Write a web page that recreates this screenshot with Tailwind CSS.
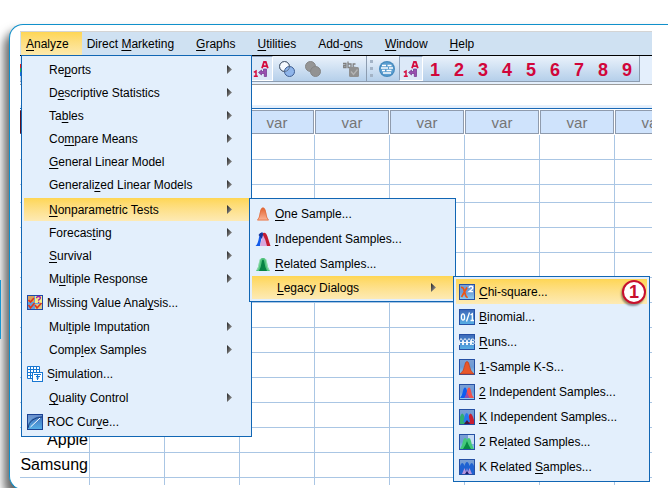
<!DOCTYPE html>
<html lang="en">
<head>
<meta charset="utf-8">
<title>Data Editor</title>
<script src="https://cdn.jsdelivr.net/npm/@tailwindcss/browser@4"></script>
</head>
<body class="relative h-screen overflow-hidden bg-white pt-6 pl-[9px] font-['Liberation_Sans',Arial,sans-serif] text-xs text-black [text-decoration-skip-ink:none]">

<svg class="absolute size-0" aria-hidden="true">
  <defs>
    <linearGradient id="blue" x1="0" y1="0" x2="0" y2="1"><stop offset="0" stop-color="#7c9fd4"/><stop offset=".5" stop-color="#6b9bd6"/><stop offset="1" stop-color="#8fd0f2"/></linearGradient>
    <linearGradient id="deep" x1="0" y1="0" x2="0" y2="1"><stop offset="0" stop-color="#3d68b8"/><stop offset="1" stop-color="#57b0e6"/></linearGradient>
    <linearGradient id="orange" x1="0" y1="0" x2="0" y2="1"><stop offset="0" stop-color="#e2622c"/><stop offset="1" stop-color="#fbb79a"/></linearGradient>
    <linearGradient id="arrowg" x1="0" y1="0" x2="1" y2="1"><stop offset="0" stop-color="#222"/><stop offset="1" stop-color="#aaa"/></linearGradient>
  </defs>
  <symbol id="i-missing" viewBox="0 0 16 16"><rect width="16" height="15" fill="#1f4aa8"/><rect x="1" y="1" width="14" height="13" fill="#5fa3dd"/><rect x="8" y="1" width="7" height="7" fill="#f3f08a"/><rect x="1" y="1" width="6" height="6" fill="#d8a05c"/><rect x="8" y="9" width="7" height="5" fill="#d9c88a"/><path d="M1.500 5l2 2 3.500-4M1.500 10l2 3 4-5M8 10l2 3 4.500-5" fill="none" stroke="#e33418" stroke-width="1.600"/><path d="M9.500 3.200q0-1.700 1.900-1.700 2 0 2 1.500 0 1-1.800 2v.8M11.600 6.800v1.200" fill="none" stroke="#a01ca8" stroke-width="1.400"/></symbol>
  <symbol id="i-simulation" viewBox="0 0 16 16"><path d="M.5.500h12v12H.5zM.5 3.500h12M.5 6.500h12M.5 9.500h12M3.500.500v12M6.500.500v12M9.500.500v12" fill="#fff" stroke="#1877d2"/><rect x="5.500" y="6.500" width="10" height="9" fill="#fff" stroke="#1877d2"/><path d="M7 8.500h7M9 10.500h4M9.500 12h2.500M10.500 8v6" stroke="#1877d2"/></symbol>
  <symbol id="i-roc" viewBox="0 0 16 16"><rect x=".5" y=".5" width="15" height="15" fill="url(#deep)" stroke="#1b4395"/><path d="M1 15V12Q2 3 15 2V1H1z" fill="#b9d5ee" opacity=".35"/><path d="M1 14Q2 4 15 3" fill="none" stroke="#1b3f7e"/><path d="M3.500 13L13 4" stroke="#fff"/></symbol>
  <symbol id="i-one" viewBox="0 0 16 16"><path d="M2 14.500Q4 12.500 5 6 5.800 1.500 8 1.500T11 6q1 6.500 3 8.500z" fill="url(#orange)"/><path d="M2.500 14Q4.500 12.500 5.300 6.500 6 2 8 2t2.700 4.500q.8 6 2.800 7.500z" fill="none" stroke="#dd6a3d" stroke-width=".7"/></symbol>
  <symbol id="i-indep" viewBox="0 0 16 16"><path d="M.5 15Q3 13 4 6.500 5 1.500 7.500 1.500 5.800 10 5 15z" fill="#125bea"/><path d="M3.500 4Q5 1 7.500 1.500L9 5 7 8z" fill="#16359a"/><path d="M5 15Q6.500 8 8 4l3 2 1.500 9z" fill="#d9a8dd"/><path d="M8 2q3-1.500 4.500 3.500l3 9.500H12Q11 9 8 4z" fill="#c51d32"/></symbol>
  <symbol id="i-related" viewBox="0 0 16 16"><path d="M1 15Q3.500 12 4 6.500 5 1.500 8 2q3-.5 4 4.500.5 5.500 3 8.500z" fill="#53c47e"/><path d="M4 15Q6 11 6.500 7 7 3.500 8 3.500T9.500 7q.5 4 2.500 8z" fill="#078243"/><path d="M5 3Q3.800 11 2.500 14M11 3q1 8 2.500 11" fill="none" stroke="#a6e4bd" stroke-width=".7"/></symbol>
  <symbol id="i-chi" viewBox="0 0 16 16"><rect x=".5" y=".5" width="15" height="15" fill="url(#blue)" stroke="#2550a5"/><path d="M2 3.500q2-.5 2.700 1.800l2 6.200q.6 2 2 1.500M8 3.500L2.500 13" fill="none" stroke="#ed5415" stroke-width="1.700"/><path d="M10 3.800q.3-1.500 2-1.500 1.800 0 1.800 1.500 0 1-3.600 3.800H14" fill="none" stroke="#fff" stroke-width="1.400"/></symbol>
  <symbol id="i-binomial" viewBox="0 0 16 16"><rect x=".5" y=".5" width="15" height="15" fill="url(#deep)" stroke="#2550a5"/><ellipse cx="4" cy="8" rx="1.600" ry="3.200" fill="none" stroke="#fff" stroke-width="1.300"/><path d="M7.500 12.500l3-9M11.500 6l1.800-1.300V11.500M11.500 11.500H15" fill="none" stroke="#fff" stroke-width="1.300"/></symbol>
  <symbol id="i-runs" viewBox="0 0 16 16"><rect x=".5" y=".5" width="15" height="15" fill="url(#deep)" stroke="#2550a5"/><path d="M.5 11V6.500L2 4.500 3.500 6.500V11M.5 8.500h3M4.500 11V6.500L6 4.500 7.500 6.500V11M4.500 8.500h3M8.500 11V6.500L10 4.500 11.500 6.500V11M8.500 8.500h3M12.500 5v5.500h2l.8-1-.8-1.700h-2 2l.8-1.300-.8-1.500z" fill="none" stroke="#fff" stroke-width=".9"/></symbol>
  <symbol id="i-ks" viewBox="0 0 16 16"><rect x=".5" y=".5" width="15" height="15" fill="url(#blue)" stroke="#2550a5"/><path d="M1 15Q5 12 5.700 6.500 6.300 2.500 8 2.500t2.300 4Q11 12 15 15z" fill="#e8562a" stroke="#c33a14" stroke-width=".7"/></symbol>
  <symbol id="i-2ind" viewBox="0 0 16 16"><rect x=".5" y=".5" width="15" height="15" fill="url(#blue)" stroke="#2550a5"/><path d="M1 14Q3.500 11 4 7q.7-3.500 2-3.500T8 7q.5 4 2.500 7z" fill="#0d5cf0"/><path d="M5.500 14Q7.500 11 8 7q.5-3.500 2-3.500T12 7q.5 4 3 7z" fill="#f0524e"/><path d="M5.500 14Q7 11 8 8q1 3 2.500 6z" fill="#8d4fb4"/></symbol>
  <symbol id="i-kind" viewBox="0 0 16 16"><rect x=".5" y=".5" width="15" height="15" fill="url(#blue)" stroke="#2550a5"/><path d="M1 15V8q1-3.500 2.300-3.500T5.500 8L8 15z" fill="#2fae72"/><path d="M8 15l1.500-7q.8-3.500 2-3.500T14 8l1 3v4z" fill="#c81d31"/><path d="M4.500 13l1.200-6q.8-3 2-3t2 3l1.300 6-3.300 1z" fill="#2777ee"/><path d="M5 15l3-4 3 4z" fill="#421442"/></symbol>
  <symbol id="i-2rel" viewBox="0 0 16 16"><rect x=".5" y=".5" width="15" height="15" fill="url(#blue)" stroke="#2550a5"/><rect x="9" y="1" width="6" height="9" fill="#c8dbf4"/><path d="M1 15Q3.500 11 4 7q.7-3 2-3t2 2q.7-2 2-2t2 3q.5 4 3 8z" fill="#43c979"/><path d="M4 15q2.500-3.500 4-8 1.500 4.500 4 8z" fill="#078a43"/></symbol>
  <symbol id="i-krel" viewBox="0 0 16 16"><rect x=".5" y=".5" width="15" height="15" fill="url(#blue)" stroke="#2550a5"/><path d="M1 15V7q1-3 2.300-3T5.500 7Q6.500 3 8 3t2.500 4q1-3 2.200-3T15 7v8z" fill="#1f62d2"/><path d="M3 15l2.500-6L7 13l1-4 1 4 1.500-4L13 15z" fill="#b795dc"/><path d="M6 15l2-3 2 3z" fill="#161b6c"/></symbol>
  <symbol id="i-labels" viewBox="0 0 16 16"><path d="M9 7.200L11 1h1.800l2 6.200M10 5.200h4" fill="none" stroke="#d40d3f" stroke-width="1.800"/><path d="M.8 11.300L3 10v5.500M.8 15.300h4" fill="none" stroke="#d40d3f" stroke-width="1.500"/><path d="M5.500 11.500L8.500 9v1.500h2V8h3v7.500h-2.200v-3H8.500V14z" fill="#9a4fb0" stroke="#71308c" stroke-width=".7"/></symbol>
  <symbol id="i-sets" viewBox="0 0 16 16"><circle cx="5.500" cy="5.500" r="5" fill="#f5f9fe" stroke="#56657a"/><circle cx="10.500" cy="10.500" r="5" fill="#8fb5ea" stroke="#3f5e92"/><circle cx="5.500" cy="5.500" r="5" fill="none" stroke="#56657a" stroke-width=".8"/></symbol>
  <symbol id="i-sets-off" viewBox="0 0 16 16"><circle cx="5.500" cy="5.500" r="5" fill="#959595" stroke="#858585"/><circle cx="10.500" cy="10.500" r="5" fill="#929292" stroke="#858585"/></symbol>
  <symbol id="i-spell" viewBox="0 0 16 16"><path d="M0 2.500h3v4H.7v-2H3M5 .5v6h3V3H5M12.500 3h-2.300v3.500h2.300" fill="none" stroke="#808080" stroke-width="1.300"/><rect x="6" y="6" width="10" height="10" rx="1.500" fill="#909090"/><path d="M8 10.500L10.500 13.500 14.500 8.500" fill="none" stroke="#b4b4b4" stroke-width="1.300"/></symbol>
  <symbol id="i-globe" viewBox="0 0 16 16"><circle cx="8" cy="8" r="8" fill="#4589bd"/><circle cx="8" cy="8" r="6.800" fill="#5c9ed0"/><path d="M3 4.500h4M8.500 4.500h4M2 7h7M10 7h4M3 9.500h3M7.500 9.500h5M4 12h8" stroke="#fff" stroke-width="1.300"/></symbol>
</svg>

<div class="absolute top-[280px] left-0 h-[59px] w-px bg-[#1496d2]"></div>

<div class="rounded-l-[14px] border border-r-0 border-[#1090cb] bg-white pt-1.5 pr-4 pb-1 pl-2.5 shadow-[-4px_8px_10px_1px_rgba(0,0,0,0.6)]">
  <div class="relative">
    <nav id="menubar" aria-label="Main menu" class="flex h-[25px] border-t border-b border-t-[#d4d4d4] border-b-black bg-[#cfe1f2] pl-px"></nav>

    <div class="h-[29px] border-b border-[#9a9a9a] bg-[#e4effc]">
      <div id="toolbar" role="toolbar" aria-label="Tools" class="flex h-[26px] w-[620px] items-stretch border-r border-b border-[#8c9cb0] bg-linear-to-b from-[#eaf2fb] to-[#b5cfea]"></div>
    </div>
    <div class="h-[24px] border-b border-[#1a69b5] bg-linear-to-b from-white from-85% to-[#e4effc] to-90%"></div>

    <div class="overflow-hidden pt-px">
      <table id="grid" class="w-max table-fixed border-separate border-spacing-0"></table>
    </div>

    <div id="menus"></div>
  </div>
</div>

<script>
const mnemonic = s => s.replace(/_(.)/, '<u class="underline-offset-2">$1</u>');
const icon = (id, cls) => `<svg class="${cls}" aria-hidden="true"><use href="#${id}"/></svg>`;

document.getElementById('menubar').innerHTML =
  ['_Analyze', 'Direct _Marketing', '_Graphs', '_Utilities', 'Add-_ons', '_Window', '_Help'].map((t, i) =>
    `<button class="${i === 0
      ? 'shrink-0 bg-linear-to-b from-[#fed654] to-[#fde9ad] pr-[13px] pl-[5px]'
      : 'shrink-0 pr-[17px] pl-[5px]'}">${mnemonic(t)}</button>`).join('');

const pressed = 'flex w-6 shrink-0 items-center justify-center border border-[#8fa3bd] border-r-white border-b-white bg-[#dce9f8]';
const plain = 'flex w-6 shrink-0 items-center justify-center';
const tool = (id, label, cls) => `<button aria-label="${label}" class="${cls}">${icon(id, 'size-4')}</button>`;
document.getElementById('toolbar').innerHTML = `
  <div class="flex w-[347px] shrink-0 border-r border-[#8c9cb0]">
    <div class="flex w-px shrink-0 flex-col pt-2"><i class="h-1 bg-[#e02020]"></i><i class="h-1 bg-[#25b050]"></i><i class="h-1 bg-[#1c6ce0]"></i></div>
    <div class="ml-auto flex gap-x-0.5 pr-[3px]">
      ${tool('i-labels', 'Value labels', pressed)}
      ${tool('i-sets', 'Use variable sets', plain)}
      ${tool('i-sets-off', 'Show all variables', plain)}
      <span class="w-2.5"></span>
      ${tool('i-spell', 'Spell check', plain)}
    </div>
  </div>
  <div class="my-1 mr-0.5 ml-[3px] w-0 border-l-3 border-dotted border-[#a3b3c6]"></div>
  ${tool('i-globe', 'Web', plain)}
  ${tool('i-labels', 'Labels', pressed)}
  ${[1,2,3,4,5,6,7,8,9].map(n => `<button class="w-6 shrink-0 text-lg font-bold text-[#d1063a]">${n}</button>`).join('')}`;

const cols = Array.from({length: 8});
const labels = {12: 'Apple', 13: 'Samsung'};
const row = (i, h) => `<tr class="${h}">
  <th scope="row" class="w-[70px] border-r border-b border-[#aac6e4] p-0 pr-px text-right text-base leading-4 font-normal">${labels[i] || ''}</th>
  ${cols.map(() => '<td class="w-[75px] border-r border-b border-[#aac6e4] p-0"></td>').join('')}</tr>`;
document.getElementById('grid').innerHTML = `
  <thead><tr>
    <th class="w-[70px] p-0 pb-px"><div class="h-6 border border-[#8f9bad] border-l-[#5a1020] bg-[#cfe3fc]"></div></th>
    ${cols.map(() => '<th scope="col" class="w-[75px] p-0 pr-px pb-px"><div class="h-6 border border-[#8f9bad] bg-[#cfe3fc] pt-0.5 text-center text-[15px] leading-5 font-normal text-[#757575]">var</div></th>').join('')}
  </tr></thead>
  <tbody>${Array.from({length: 14}, (_, i) => row(i, i === 2 ? 'h-[18px]' : 'h-[25px]')).join('')}
  <tr class="h-[7px]">${[0, ...cols].map(() => '<td class="border-r border-[#aac6e4] p-0"></td>').join('')}</tr></tbody>`;

const arrow = '<svg class="mr-[17px] ml-auto h-[9px] w-[5px]" viewBox="0 0 5 9" aria-hidden="true"><path d="M0 0L5 4.500 0 9z" fill="url(#arrowg)"/></svg>';
const ico = id => icon(id, 'mr-1 size-4 shrink-0');
const base = {
  sub: 'flex h-[23px] w-full items-center pl-[25px]',
  subOn: 'flex h-[23px] w-full items-center bg-linear-to-b from-[#fed654] to-[#fdeab4] pl-[25px]',
  act: 'flex h-[25px] w-full items-center pl-[3px]',
  actOn: 'flex h-[25px] w-full items-center bg-linear-to-b from-[#fed654] to-[#fdeab4] pl-[3px]'
};
const item = ([text, kind, id]) => `<li><button role="menuitem" class="${base[kind]}">${id ? ico(id) : ''}<span>${mnemonic(text)}</span>${kind.startsWith('sub') ? arrow : ''}</button></li>`;
const menu = (cls, label, items) => `<ul role="menu" aria-label="${label}" class="${cls}">${items.map(item).join('')}</ul>`;

document.getElementById('menus').innerHTML =
  menu('absolute top-6 left-px w-[231px] border border-[#1166b4] bg-[#e3effc] p-0.5 [&>li:nth-child(6)]:mb-0.5', 'Analyze', [
    ['Re_ports', 'sub'], ['D_escriptive Statistics', 'sub'], ['Ta_bles', 'sub'], ['Co_mpare Means', 'sub'],
    ['_General Linear Model', 'sub'], ['Generali_zed Linear Models', 'sub'], ['_Nonparametric Tests', 'subOn'],
    ['Forecas_ting', 'sub'], ['_Survival', 'sub'], ['M_ultiple Response', 'sub'],
    ['Missing Value Anal_ysis...', 'act', 'i-missing'], ['Mul_tiple Imputation', 'sub'], ['Comp_lex Samples', 'sub'],
    ['S_imulation...', 'act', 'i-simulation'], ['_Quality Control', 'sub'], ['ROC Cur_ve...', 'act', 'i-roc']
  ]) +
  menu('absolute top-[167px] left-[229px] w-[207px] border border-[#1166b4] bg-[#e3effc] p-0.5', 'Nonparametric Tests', [
    ['_One Sample...', 'act', 'i-one'], ['_Independent Samples...', 'act', 'i-indep'],
    ['_Related Samples...', 'act', 'i-related'], ['_Legacy Dialogs', 'subOn']
  ]) +
  menu('absolute top-[245px] left-[433px] w-[197px] border border-[#1166b4] bg-[#e3effc] p-0.5', 'Legacy Dialogs', [
    ['_Chi-square...', 'actOn', 'i-chi'], ['_Binomial...', 'act', 'i-binomial'], ['_Runs...', 'act', 'i-runs'],
    ['_1-Sample K-S...', 'act', 'i-ks'], ['_2 Independent Samples...', 'act', 'i-2ind'],
    ['_K Independent Samples...', 'act', 'i-kind'], ['2 Re_lated Samples...', 'act', 'i-2rel'],
    ['K Related _Samples...', 'act', 'i-krel']
  ]) +
  '<span class="absolute top-[249px] left-[602px] flex size-6 items-center justify-center rounded-full border-2 border-[#c8102e] bg-white text-lg font-bold text-[#c8102e] shadow-[-1px_2px_2px_rgba(0,0,0,0.4)]">1</span>';
</script>
</body>
</html>
